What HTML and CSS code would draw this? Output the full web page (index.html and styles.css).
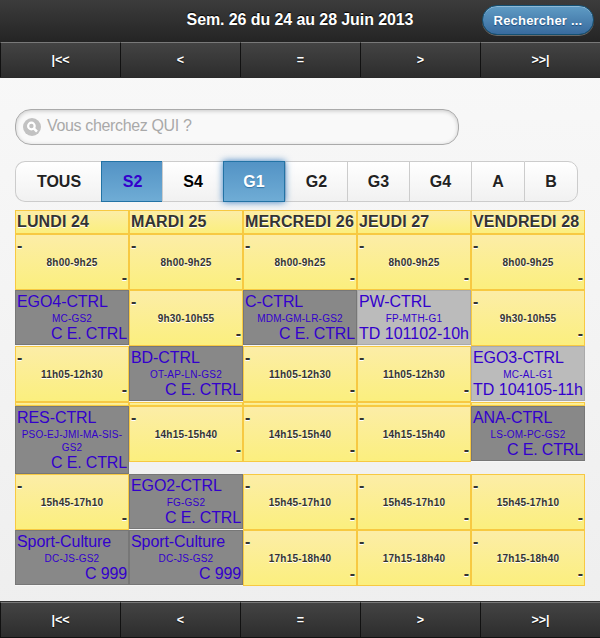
FILE: index.html
```html
<!DOCTYPE html>
<html lang="fr">
<head>
<meta charset="utf-8">
<title>Sem. 26 du 24 au 28 Juin 2013</title>
<link rel="stylesheet" href="styles.css">
</head>
<body>
<header class="bar">
  <h1>Sem. 26 du 24 au 28 Juin 2013</h1>
  <a class="search-btn">Rechercher ...</a>
</header>
<nav class="nav"><a>|&lt;&lt;</a><a>&lt;</a><a>=</a><a>&gt;</a><a>&gt;&gt;|</a></nav>
<main>
  <div class="search">
    <svg width="18" height="18" viewBox="0 0 18 18"><circle cx="9" cy="9" r="9" fill="#c2c2c2"/><circle cx="8.4" cy="8" r="3.3" fill="none" stroke="#fff" stroke-width="2.2"/><path d="M10.8 10.4L14 13.6" stroke="#fff" stroke-width="2.6"/></svg>
    <span>Vous cherchez QUI ?</span>
  </div>
  <div class="filters"><a class="tous">TOUS</a><a class="on link">S2</a><a class="black">S4</a><a class="on focus">G1</a><a>G2</a><a>G3</a><a>G4</a><a>A</a><a>B</a></div>
  <section class="grid" id="grid"></section>
</main>
<nav class="nav foot"><a>|&lt;&lt;</a><a>&lt;</a><a>=</a><a>&gt;</a><a>&gt;&gt;|</a></nav>
<script src="app.js"></script>
</body>
</html>
```
FILE: styles.css
```css
* { box-sizing: border-box; }
body {
  margin: 0;
  height: 638px;
  display: flex;
  flex-direction: column;
  overflow: hidden;
  font-family: "Liberation Sans", Arial, sans-serif;
  font-size: 16px;
  color: #333;
  background: linear-gradient(#f9f9f9, #eee);
}
.bar {
  height: 42px;
  flex: none;
  position: relative;
  background: linear-gradient(#3c3c3c, #242424);
  color: #fff;
  text-shadow: 0 -1px 1px #000;
}
h1 { margin: 0; font-size: 16px; line-height: 20px; padding-top: 10px; text-align: center; letter-spacing: -.09px; }
.search-btn {
  position: absolute;
  top: 5px;
  right: 6px;
  width: 112px;
  height: 30px;
  border: 1px solid #145072;
  border-radius: 15px;
  background: linear-gradient(#5f9cc5, #396b9e);
  box-shadow: inset 0 1px rgba(255,255,255,.3), 0 1px rgba(255,255,255,.3);
  font-size: 13px;
  font-weight: bold;
  line-height: 29px;
  text-align: center;
  letter-spacing: .2px;
  text-shadow: 0 1px 1px #194b7e;
}
.nav {
  height: 36px;
  flex: none;
  display: grid;
  grid-template-columns: repeat(5, 120px);
  border-bottom: 1px solid #2a2a2a;
  background: linear-gradient(#444, #2d2d2d);
}
.nav a {
  border-left: 1px solid #111;
  border-top: 1px solid #797979;
  color: #fff;
  font-size: 12.5px;
  font-weight: bold;
  line-height: 34px;
  text-align: center;
  text-shadow: 0 1px 1px #111;
}
.foot { height: 37px; border-top: 1px solid #333; border-bottom-color: #111; }
main { height: 523px; flex: none; padding: 31px 15px 0; }
.search {
  width: 444px;
  height: 36px;
  display: flex;
  align-items: center;
  gap: 6px;
  padding: 0 0 0 7px;
  border: 1px solid #aaa;
  border-radius: 16px;
  background: #f9f9f9;
  box-shadow: inset 0 1px 4px rgba(0,0,0,.2);
  color: #a9a9a9;
}
.search span { padding-bottom: 3px; letter-spacing: -.35px; }
.filters {
  margin-top: 16px;
  width: 563px;
  height: 41px;
  display: grid;
  grid-template-columns: 86px 61px 61px 62px 62px 62px 62px 53px 54px;
}
.filters a {
  border: 1px solid #ccc;
  border-right-width: 0;
  background: linear-gradient(#fff, #f1f1f1);
  color: #222;
  font-weight: bold;
  line-height: 39px;
  text-align: center;
  text-shadow: 0 1px 0 #fff;
}
.filters a:first-child { border-radius: 10px 0 0 10px; padding-left: 1px; }
.filters a:last-child { border-right-width: 1px; border-radius: 0 10px 10px 0; }
.filters .black { color: #000; }
.filters .on {
  border: 1px solid #2373a5;
  background: linear-gradient(#5393c5, #6facd5);
  color: #fff;
  text-shadow: 0 1px 1px #3373a5;
}
.filters .link { color: #3300cc; text-shadow: none; border-right-width: 0; padding-left: 1px; }
.filters .focus { z-index: 1; box-shadow: 0 0 7px #387bbe; }
.grid {
  margin-top: 8px;
  display: grid;
  grid-template-columns: repeat(5, 114px);
  grid-template-rows: 24px 56px 56px 56px 4px 68px 56px 56px;
  align-items: start;
}
.cell {
  height: 56px;
  padding: 2px 1px 0;
  border: 1px solid #f7c942;
  background: linear-gradient(#fceda7, #fbef7e);
  font-weight: bold;
  text-shadow: 0 1px 0 #fff;
  white-space: nowrap;
}
.head { height: 24px; line-height: 18px; letter-spacing: .12px; }
.strip { height: 4px; padding: 0; }
.top { line-height: 18px; height: 18px; letter-spacing: -.08px; }
.mid { font-size: 10px; line-height: 13px; padding-top: 1px; letter-spacing: .22px; text-align: center; white-space: normal; }
.bottom { line-height: 18px; text-align: right; }
.dark, .light {
  height: 55px;
  border-color: #777;
  background: #888;
  color: #3300cc;
  font-weight: normal;
  text-shadow: none;
  box-shadow: 0 1px #f6f6f6;
}
.dark .bottom { letter-spacing: -.15px; }
.light { background: #bbb; border-color: #aaa; }
.tall { height: 68px; box-shadow: none; }
```
FILE: app.js
```js
const days = ["LUNDI 24", "MARDI 25", "MERCREDI 26", "JEUDI 27", "VENDREDI 28"];
const exam = "C E. CTRL";
const rows = [
  ["8h00-9h25", {}],
  ["9h30-10h55", {
    0: ["dark", "EGO4-CTRL", "MC-GS2", exam],
    2: ["dark", "C-CTRL", "MDM-GM-LR-GS2", exam],
    3: ["light", "PW-CTRL", "FP-MTH-G1", "TD 101102-10h"]
  }],
  ["11h05-12h30", {
    1: ["dark", "BD-CTRL", "OT-AP-LN-GS2", exam],
    4: ["light", "EGO3-CTRL", "MC-AL-G1", "TD 104105-11h"]
  }],
  null,
  ["14h15-15h40", {
    0: ["dark tall", "RES-CTRL", "PSO-EJ-JMI-MA-SIS-GS2", exam],
    4: ["dark", "ANA-CTRL", "LS-OM-PC-GS2", exam]
  }],
  ["15h45-17h10", { 1: ["dark", "EGO2-CTRL", "FG-GS2", exam] }],
  ["17h15-18h40", {
    0: ["dark", "Sport-Culture", "DC-JS-GS2", "C 999"],
    1: ["dark", "Sport-Culture", "DC-JS-GS2", "C 999"]
  }]
];
let html = days.map(d => `<div class="cell head">${d}</div>`).join("");
for (const row of rows) {
  for (let i = 0; i < 5; i++) {
    if (!row) { html += '<div class="cell strip"></div>'; continue; }
    const [cls, a, b, c] = row[1][i] || ["", "-", row[0], "-"];
    html += `<div class="cell ${cls}"><div class="top">${a}</div><div class="mid">${b}</div><div class="bottom">${c}</div></div>`;
  }
}
document.getElementById("grid").innerHTML = html;
```
